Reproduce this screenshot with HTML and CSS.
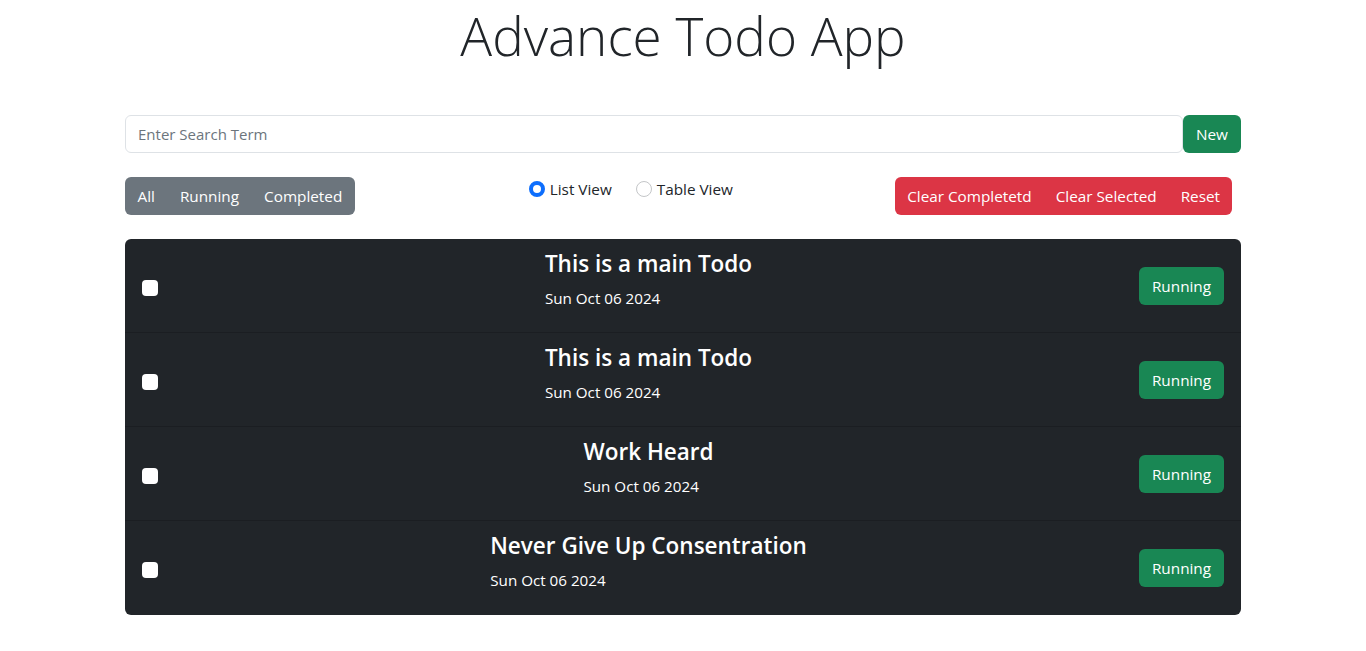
FILE: index.html
```html
<!DOCTYPE html>
<html lang="en">
<head>
<meta charset="utf-8">
<title>Advance Todo App</title>
<link rel="stylesheet" href="styles.css">
</head>
<body>
<div class="container">
  <h1 class="title">Advance Todo App</h1>

  <div class="search-row">
    <input class="search" type="text" placeholder="Enter Search Term">
    <button class="btn btn-green btn-new">New</button>
  </div>

  <div class="controls">
    <div class="btn-group gray">
      <button class="btn">All</button>
      <button class="btn">Running</button>
      <button class="btn">Completed</button>
    </div>
    <div class="views">
      <label class="radio-item"><span class="radio checked"></span>List View</label>
      <label class="radio-item"><span class="radio"></span>Table View</label>
    </div>
    <div class="btn-group red">
      <button class="btn">Clear Completetd</button>
      <button class="btn">Clear Selected</button>
      <button class="btn">Reset</button>
    </div>
  </div>

  <ul class="todo-list">
    <li class="todo">
      <span class="check"></span>
      <div class="todo-body">
        <div class="todo-text">
          <h4 class="todo-title">This is a main Todo</h4>
          <p class="todo-date">Sun Oct 06 2024</p>
        </div>
      </div>
      <button class="btn btn-green btn-status">Running</button>
    </li>
    <li class="todo">
      <span class="check"></span>
      <div class="todo-body">
        <div class="todo-text">
          <h4 class="todo-title">This is a main Todo</h4>
          <p class="todo-date">Sun Oct 06 2024</p>
        </div>
      </div>
      <button class="btn btn-green btn-status">Running</button>
    </li>
    <li class="todo">
      <span class="check"></span>
      <div class="todo-body">
        <div class="todo-text">
          <h4 class="todo-title">Work Heard</h4>
          <p class="todo-date">Sun Oct 06 2024</p>
        </div>
      </div>
      <button class="btn btn-green btn-status">Running</button>
    </li>
    <li class="todo">
      <span class="check"></span>
      <div class="todo-body">
        <div class="todo-text">
          <h4 class="todo-title">Never Give Up Consentration</h4>
          <p class="todo-date">Sun Oct 06 2024</p>
        </div>
      </div>
      <button class="btn btn-green btn-status">Running</button>
    </li>
  </ul>
</div>
</body>
</html>
```

FILE: styles.css
```css
* { box-sizing: border-box; }

body {
  margin: 0;
  font-family: "Open Sans", "Noto Sans", sans-serif;
  font-size: 15.3px;
  line-height: 24px;
  color: #212529;
  background: #fff;
}

.container {
  width: 1116px;
  margin: 0 auto;
}

.title {
  margin: 0;
  text-align: center;
  font-weight: 300;
  font-size: 53px;
  line-height: 72px;
  color: #212529;
}

.search-row {
  display: flex;
  margin-top: 43px;
}

.search {
  flex: 1;
  height: 38px;
  padding: 6px 12px;
  font-family: inherit;
  font-size: 15px;
  color: #212529;
  border: 1px solid #dee2e6;
  border-radius: 6px;
  outline: none;
}
.search::placeholder { color: #6c757d; }

.btn {
  font-family: inherit;
  font-size: 15.3px;
  line-height: 24px;
  padding: 7px 12px;
  border: 0;
  color: #fff;
  background: transparent;
  cursor: pointer;
  white-space: nowrap;
}

.btn-green {
  background: #198754;
  border-radius: 6px;
  height: 38px;
}
.btn-new { width: 58px; padding: 7px 0; }
.btn-status { width: 85px; padding: 7px 0; }

.controls {
  display: flex;
  align-items: flex-start;
  margin-top: 24px;
}

.btn-group {
  display: flex;
  height: 38px;
  border-radius: 6px;
  overflow: hidden;
}
.btn-group.gray { background: #6c757d; }
.btn-group.gray .btn { padding: 7px 12.5px; }
.btn-group.red {
  background: #dc3545;
  margin-left: auto;
  margin-right: 9px;
}

.views {
  display: flex;
  gap: 24px;
  margin-left: 174px;
}

.radio-item {
  display: flex;
  align-items: flex-start;
  gap: 5px;
  font-size: 15.3px;
  line-height: 24px;
}

.radio {
  width: 16px;
  height: 16px;
  margin-top: 4px;
  border-radius: 50%;
  border: 1px solid #c4c6c8;
  background: #fff;
}
.radio.checked {
  border: 4.5px solid #0d6efd;
}

.todo-list {
  list-style: none;
  margin: 24px 0 0;
  padding: 0;
  background: #212529;
  border-radius: 6px;
  overflow: hidden;
}

.todo {
  display: flex;
  align-items: center;
  padding: 16px 17px;
  border-bottom: 1px solid #1b1e22;
}
.todo:last-child {
  border-bottom: 0;
  padding-bottom: 17px;
}

.check {
  width: 16px;
  height: 16px;
  margin-top: 4px;
  border-radius: 4px;
  background: #fff;
  flex: none;
}

.todo-body {
  flex: 1;
  display: flex;
  justify-content: center;
}

.todo-text {
  color: #fff;
  margin-top: -6px;
  margin-bottom: 6px;
}

.todo-title {
  margin: 0 0 8px;
  font-size: 22.5px;
  line-height: 29px;
  font-weight: 600;
}

.todo-date {
  margin: 0;
  font-size: 15.2px;
  line-height: 24px;
}
```
